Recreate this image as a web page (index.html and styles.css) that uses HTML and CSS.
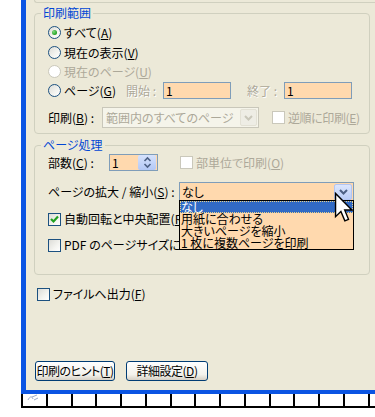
FILE: index.html
```html
<!DOCTYPE html>
<html lang="ja">
<head>
<meta charset="utf-8">
<link rel="stylesheet" href="styles.css">
</head>
<body>
<div class="window">
  <div class="prev-group"></div>

  <fieldset class="group g1">
    <legend>印刷範囲</legend>
    <div class="row r1"><span class="radio checked"></span><span class="lbl">すべて(<u>A</u>)</span></div>
    <div class="row r2"><span class="radio"></span><span class="lbl">現在の表示(<u>V</u>)</span></div>
    <div class="row r3 disabled"><span class="radio dis"></span><span class="lbl">現在のページ(<u>U</u>)</span></div>
    <div class="row r4">
      <div class="range-radio"><span class="radio"></span><span class="lbl">ページ(<u>G</u>)</span></div>
      <span class="range-lbl">開始 :</span>
      <span class="input peach w68">1</span>
      <span class="range-lbl end">終了 :</span>
      <span class="input peach w68">1</span>
    </div>
    <div class="row r5">
      <span class="field-lbl w54">印刷(<u>B</u>) :</span>
      <div class="select dis-select">
        <span class="select-text">範囲内のすべてのページ</span>
        <span class="drop-btn dis-btn"><svg width="9" height="6" viewBox="0 0 9 6"><polyline points="1,1 4.5,4.5 8,1" fill="none" stroke="#C9C7BA" stroke-width="2"/></svg></span>
      </div>
      <span class="check dis"></span><span class="lbl grey tight">逆順に印刷(<u>E</u>)</span>
    </div>
  </fieldset>

  <fieldset class="group g2">
    <legend>ページ処理</legend>
    <div class="row s1">
      <span class="field-lbl w61">部数(<u>C</u>) :</span>
      <div class="input peach spin">
        <span class="spin-val">1</span>
        <span class="spin-btn">
          <svg width="9" height="13" viewBox="0 0 9 13"><polyline points="1.5,5 4.5,2 7.5,5" fill="none" stroke="#4D6185" stroke-width="1.6"/><polyline points="1.5,8 4.5,11 7.5,8" fill="none" stroke="#4D6185" stroke-width="1.6"/></svg>
        </span>
      </div>
      <span class="check dis ml22"></span><span class="lbl grey">部単位で印刷(<u>O</u>)</span>
    </div>
    <div class="row s2">
      <span class="field-lbl w131">ページの拡大 / 縮小(<u>S</u>) :</span>
      <div class="select peach-select">
        <span class="select-text">なし</span>
        <span class="drop-btn blue-btn"><svg width="9" height="6" viewBox="0 0 9 6"><polyline points="1,1 4.5,4.5 8,1" fill="none" stroke="#4D6185" stroke-width="2"/></svg></span>
        <ul class="drop-list">
          <li class="sel">なし</li>
          <li>用紙に合わせる</li>
          <li>大きいページを縮小</li>
          <li>1 枚に複数ページを印刷</li>
        </ul>
      </div>
    </div>
    <div class="row s3"><span class="check"><svg width="11" height="11" viewBox="0 0 11 11"><polyline points="2,5 4.5,7.5 9,2.5" fill="none" stroke="#21A121" stroke-width="2.2"/></svg></span><span class="lbl clip">自動回転と中央配置(<u>R</u>)</span></div>
    <div class="row s4"><span class="check"></span><span class="lbl clip">PDF のページサイズに合わせる</span></div>
  </fieldset>

  <div class="row file-row"><span class="check"></span><span class="lbl">ファイルへ出力(<u>F</u>)</span></div>

  <div class="buttons">
    <span class="btn b1">印刷のヒント(<u>T</u>)</span>
    <span class="btn b2">詳細設定(<u>D</u>)</span>
  </div>
</div>

<div class="strip">
  <span class="cell"><svg width="12" height="8" viewBox="0 0 12 8"><path d="M1,6 C3,2 5,2 6,5 M5,3 L10,1 M7,6 L11,4" fill="none" stroke="#9AA8C8" stroke-width="1"/></svg></span>
  <span class="cell"></span><span class="cell"></span><span class="cell"></span><span class="cell"></span>
  <span class="cell"></span><span class="cell"></span><span class="cell"></span><span class="cell"></span>
  <span class="cell"></span><span class="cell"></span><span class="cell"></span><span class="cell"></span>
  <span class="cell"></span><span class="cell"></span>
</div>

<svg class="cursor" width="20" height="31" viewBox="0 0 14 22">
  <path d="M1,1 L1,17.5 L4.8,13.8 L7.6,20.5 L10.2,19.4 L7.5,12.8 L12.6,12.8 Z" fill="#fff" stroke="#000" stroke-width="1" stroke-linejoin="miter"/>
</svg>
</body>
</html>
```

FILE: styles.css
```css
* { box-sizing: border-box; margin: 0; padding: 0; }
html, body { width: 375px; height: 417px; overflow: hidden; background: #fff; }
body {
  position: relative;
  font-family: "Noto Sans CJK JP", "Noto Sans", sans-serif;
  font-size: 12px;
  line-height: 14px;
  font-feature-settings: "palt";
  color: #000;
}
u { text-decoration: underline; text-underline-offset: 1px; }

.window {
  margin-left: 21px;
  width: 354px;
  height: 394px;
  background: #ECE9D8;
  border-left: 5px solid #0A54E3;
  border-bottom: 4px solid #0A54E3;
  overflow: hidden;
}

.prev-group {
  margin-left: 8px;
  width: 420px;
  height: 3px;
  border-left: 1px solid #D0D0BF;
  border-bottom: 1px solid #D0D0BF;
  border-bottom-left-radius: 3px;
}

.group {
  margin: 3px 0 0 8px;
  width: 336px;
  min-width: 0;
  border: 1px solid #D0D0BF;
  border-radius: 4px;
  padding: 3px 0 5px 13px;
}
.group legend {
  padding: 0 2px;
  margin-left: -7px;
  color: #0046D5;
  line-height: 14px;
}
.g2 { margin-top: 4px; padding-top: 1px; padding-bottom: 19px; }

.row { display: flex; align-items: center; height: 19px; white-space: nowrap; }
.r2 { margin-top: 1px; }
.r5 { margin-top: 7px; height: 21px; }
.s2 { margin-top: 10px; height: 19px; }
.s3 { margin-top: 8px; height: 20px; }
.s4 { margin-top: 6px; height: 20px; }
.file-row { margin: 9px 0 0 11px; height: 20px; }

.lbl { margin-left: 3px; }
.clip { width: 115px; overflow: hidden; }
.tight { letter-spacing: -0.4px; }
.grey, .disabled .lbl { color: #ACA899; }

.radio {
  flex: none;
  width: 13px; height: 13px;
  border-radius: 50%;
  border: 1px solid #1C5180;
  background: linear-gradient(135deg, #DCDCD7 0%, #F4F4F0 60%, #fff 100%);
  display: flex; align-items: center; justify-content: center;
}
.radio.checked::after {
  content: "";
  width: 5px; height: 5px; border-radius: 50%;
  background: radial-gradient(circle at 35% 35%, #7EDB7E, #21A121 70%);
}
.radio.dis { border-color: #CAC8BB; background: #fff; }

.check {
  flex: none;
  width: 13px; height: 13px;
  border: 1px solid #1C5180;
  background: linear-gradient(135deg, #DCDCD7 0%, #F4F4F0 60%, #fff 100%);
  display: flex; align-items: center; justify-content: center;
}
.check.dis { border-color: #CAC8BB; background: #fff; }
.r5 .check { margin-left: 13px; }
.ml22 { margin-left: 22px; }

.range-radio { display: flex; align-items: center; width: 78px; }
.range-lbl { width: 37px; color: #ACA899; text-shadow: 1px 1px 0 #fff; }
.range-lbl.end { margin-left: 16px; }

.input {
  height: 17px;
  border: 1px solid #7F9DB9;
  padding-left: 2px;
  line-height: 15px;
}
.peach { background: #FFD9AE; }
.w68 { width: 68px; }

.field-lbl { flex: none; }
.w54 { width: 54px; }
.w61 { width: 61px; }
.w131 { width: 131px; }

.spin { width: 49px; display: flex; justify-content: space-between; padding: 0 1px 0 2px; }
.spin-btn {
  width: 18px; height: 15px;
  background: linear-gradient(#D6E2FC, #B3C8F6);
  border-radius: 2px;
  display: flex; align-items: center; justify-content: center;
}

.select {
  position: relative;
  height: 21px;
  display: flex; align-items: center; justify-content: space-between;
  padding: 0 1px 0 3px;
}
.dis-select { width: 157px; border: 1px solid #C9C7BA; background: #F5F4EA; color: #ACA899; }
.peach-select { width: 175px; height: 19px; border: 1px solid #7F9DB9; background: #FFD9AE; padding-left: 2px; }
.drop-btn {
  width: 17px; height: 17px; border-radius: 2px;
  display: flex; align-items: center; justify-content: center;
}
.dis-btn { background: #EEEDE5; border: 1px solid #E3E1D5; }
.blue-btn { width: 18px; height: 16px; background: linear-gradient(#DCE6FD, #B9CDF8); border: 1px solid #B3C6F3; }

.drop-list {
  position: absolute;
  left: -1px; top: 17px;
  width: 175px; height: 50px;
  list-style: none;
  border: 1px solid #000;
  background: #FFD9AE;
  z-index: 2;
}
.drop-list li { height: 12px; line-height: 12px; padding-left: 1px; }
.drop-list li.sel { background: #316AC5; color: #fff; outline: 1px dotted #E8D088; outline-offset: -1px; }

.buttons { display: flex; gap: 11px; margin: 57px 0 0 9px; }
.btn {
  height: 20px;
  border: 1px solid #003C74;
  border-radius: 3px;
  background: linear-gradient(#FFFFFF, #F3F2EC 70%, #D6D0C5);
  display: flex; align-items: center; justify-content: center;
  line-height: 14px;
  white-space: nowrap;
  letter-spacing: -0.5px;
}
.b1 { width: 80px; }
.b2 { width: 82px; }

.strip {
  margin-left: 21px;
  width: 360px;
  height: 14px;
  border-bottom: 2px solid #000;
  display: flex;
}
.cell { flex: none; width: 24.75px; height: 12px; border-left: 2px solid #000; background: #fff; display: flex; }
.cell svg { margin: 0 0 0 4px; }

.cursor { position: absolute; left: 334px; top: 192px; z-index: 5; }
```
